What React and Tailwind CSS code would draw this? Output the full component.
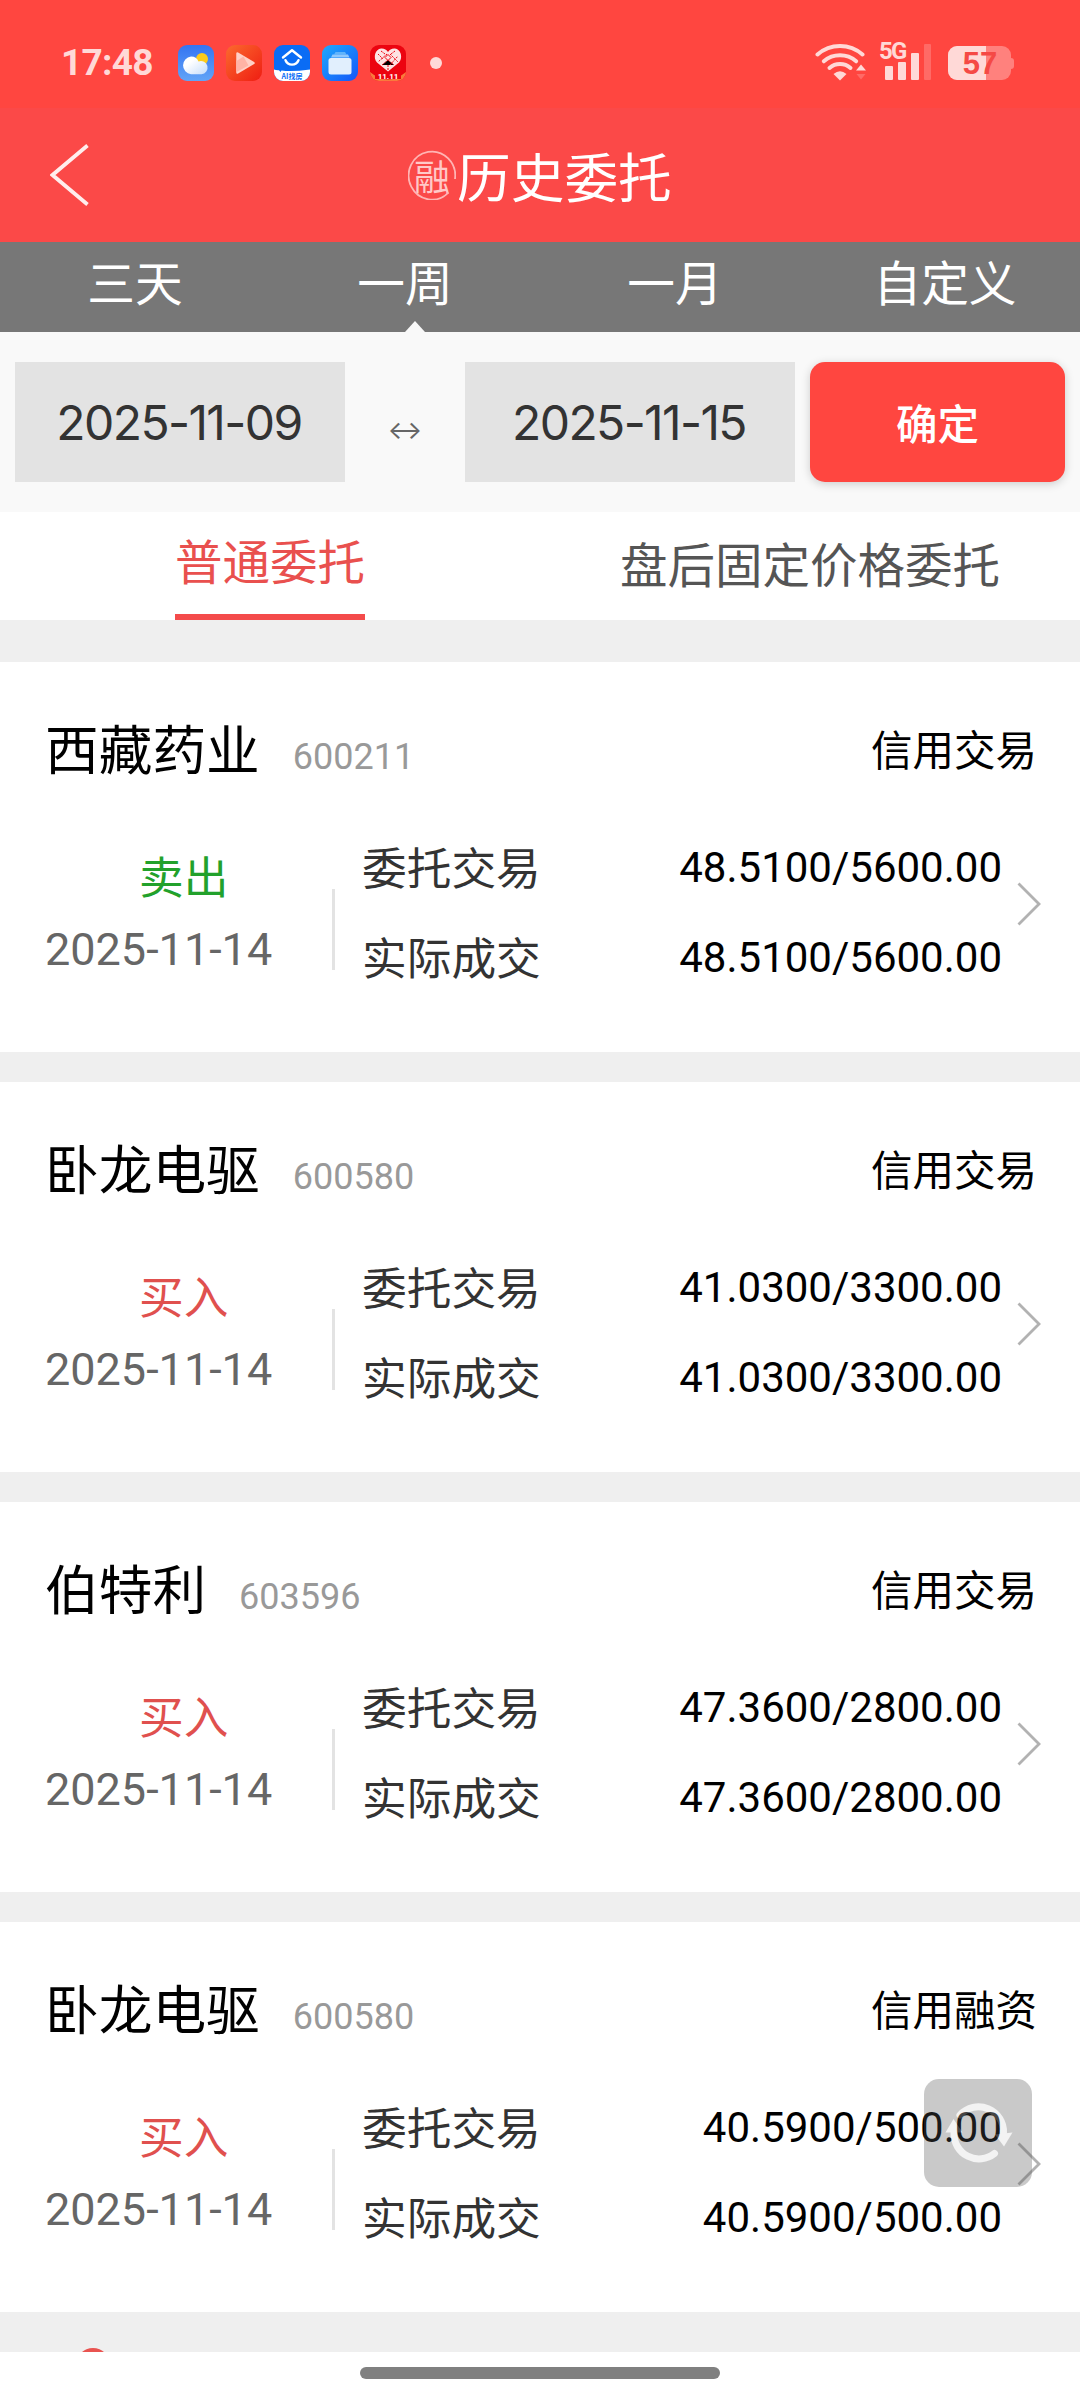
import clsx from 'clsx';

const ranges = ['三天', '一周', '一月', '自定义'];

const orders = [
    {
        name: '西藏药业',
        code: '600211',
        type: '信用交易',
        side: '卖出',
        date: '2025-11-14',
        entrust: '48.5100/5600.00',
        deal: '48.5100/5600.00',
    },
    {
        name: '卧龙电驱',
        code: '600580',
        type: '信用交易',
        side: '买入',
        date: '2025-11-14',
        entrust: '41.0300/3300.00',
        deal: '41.0300/3300.00',
    },
    {
        name: '伯特利',
        code: '603596',
        type: '信用交易',
        side: '买入',
        date: '2025-11-14',
        entrust: '47.3600/2800.00',
        deal: '47.3600/2800.00',
    },
    {
        name: '卧龙电驱',
        code: '600580',
        type: '信用融资',
        side: '买入',
        date: '2025-11-14',
        entrust: '40.5900/500.00',
        deal: '40.5900/500.00',
    },
];

const WeatherIcon = () => (
    <svg viewBox="0 0 36 36" className="w-9 h-9">
        <defs>
            <linearGradient id="sky" x1="0" y1="0" x2="0" y2="1">
                <stop offset="0" stopColor="#3474f2" />
                <stop offset="1" stopColor="#62a4f7" />
            </linearGradient>
            <linearGradient id="cloud" x1="0" y1="0" x2="1" y2="1">
                <stop offset="0.3" stopColor="#ffffff" />
                <stop offset="1" stopColor="#c4dcfb" />
            </linearGradient>
        </defs>
        <rect width="36" height="36" rx="9" fill="url(#sky)" />
        <circle cx="24" cy="14" r="6" fill="#fccb1c" />
        <path
            d="M13 11.5a8 8 0 0 1 7.5 5 6.6 6.6 0 1 1 3 12.7H13a8.9 8.9 0 0 1 0-17.7z"
            fill="url(#cloud)"
        />
    </svg>
);

const VideoIcon = () => (
    <svg viewBox="0 0 36 36" className="w-9 h-9">
        <defs>
            <linearGradient id="video" x1="0" y1="0" x2="1" y2="1">
                <stop offset="0" stopColor="#fb6a2e" />
                <stop offset="1" stopColor="#ef1d12" />
            </linearGradient>
        </defs>
        <rect width="36" height="36" rx="9" fill="url(#video)" />
        <path
            d="M11.5 8.5 27.5 18 11.5 27.5z"
            fill="#ffd0c6"
            stroke="#ffd0c6"
            strokeWidth="2.5"
            strokeLinejoin="round"
        />
        <path d="M10.5 27V16l7-4.5 5 9z" fill="#ffb3a5" />
    </svg>
);

const HouseIcon = () => (
    <svg viewBox="0 0 36 36" className="w-9 h-9">
        <rect width="36" height="36" rx="9" fill="#0a6cf5" />
        <path
            d="M0 24.5q2 1 5 .8L6.5 27l1-1.5Q18 27 36 24.5V27a9 9 0 0 1-9 9H9a9 9 0 0 1-9-9z"
            fill="#fff"
        />
        <path
            d="M9 12.5 18 5.2l9 7.3M11.5 15.2a7 7 0 0 0 13 0"
            fill="none"
            stroke="#fff"
            strokeWidth="2.4"
            strokeLinecap="round"
            strokeLinejoin="round"
        />
        <text
            x="18"
            y="33.6"
            textAnchor="middle"
            fontSize="7"
            fontWeight="700"
            fill="#0a6cf5"
            fontFamily="'Noto Sans CJK SC', sans-serif"
        >
            AI找房
        </text>
    </svg>
);

const FilesIcon = () => (
    <svg viewBox="0 0 36 36" className="w-9 h-9">
        <defs>
            <linearGradient id="files" x1="0" y1="0" x2="1" y2="1">
                <stop offset="0" stopColor="#1fa9fd" />
                <stop offset="1" stopColor="#1456f8" />
            </linearGradient>
        </defs>
        <rect width="36" height="36" rx="9" fill="url(#files)" />
        <path d="M13.5 7H23l1.5 2.5H12z" fill="#5fb4fb" />
        <path d="M10.5 9.5H26l1.5 3H9z" fill="#8fc8fc" />
        <rect x="6.5" y="13" width="23" height="16.5" rx="2.5" fill="#e1effd" />
    </svg>
);

const ShopIcon = () => (
    <svg viewBox="0 0 36 36" className="w-9 h-9">
        <defs>
            <clipPath id="shop">
                <rect width="36" height="36" rx="9" />
            </clipPath>
        </defs>
        <g clipPath="url(#shop)">
            <rect width="36" height="36" fill="#ec0410" />
            <path d="M0 27q18 15 36 0v9H0z" fill="#f97a3c" />
            <path d="M5 25q13 12 26 0v9H5z" fill="#ec0410" />
            <path
                d="M18 26.5 7 17.5C2.5 12.5 5.5 4 11 3.5c3-.3 5.5 1 7 3.5 1.5-2.5 4-3.8 7-3.5 5.5.5 8.5 9 4 14z"
                fill="#fde3e3"
            />
            <path
                d="m8 9 5 5m4-5-9 8m12 3 8-9m-8-2 8 8M12 20l6-5 6 5M11 6l4 3m10-3-4 3M18 20v5"
                stroke="#ec0410"
                strokeWidth="1"
                strokeDasharray="2 1"
            />
            <path
                d="M18 9.5 21 12.5 18 15.5 15 12.5z"
                fill="none"
                stroke="#ec0410"
            />
            <text
                x="18"
                y="34"
                textAnchor="middle"
                fontSize="8"
                fontWeight="700"
                fill="#fff"
                fontFamily="Roboto, sans-serif"
            >
                11.11
            </text>
        </g>
    </svg>
);

const WifiIcon = () => (
    <svg viewBox="0 0 52 38" className="w-[52px] h-[38px]">
        <g
            fill="none"
            stroke="#ffd9d7"
            strokeWidth="4"
            strokeLinecap="round"
        >
            <path d="M2.5 11.5a34 34 0 0 1 45 0" />
            <path d="M8.8 18.3a25 25 0 0 1 32.4 0" />
            <path d="M14.5 25a16 16 0 0 1 21 0" />
        </g>
        <path d="M25 37.5l-6.5-6.5q6.5-5.5 13 0z" fill="#ffd9d7" />
        <path d="M46 21.5l5 6H41z" fill="#ffd9d7" />
        <path d="M46 36.5l4.5-5.500h-9z" fill="#ff6a66" />
    </svg>
);

const StatusBar = () => (
    <div className="h-[108px] bg-[#ff4640] flex items-start justify-between pl-[61px] pr-[66px] font-[Roboto,sans-serif]">
        <div className="flex items-center h-9 mt-[45px]">
            <span className="w-[117px] text-[37px] leading-9 font-bold tracking-[-0.7px] text-[#ffd9d7]">
                17:48
            </span>
            <div className="flex gap-3">
                <WeatherIcon />
                <VideoIcon />
                <HouseIcon />
                <FilesIcon />
                <ShopIcon />
            </div>
            <span className="ml-6 w-3 h-3 rounded-full bg-[#ffd9d7]" />
        </div>
        <div className="flex items-end h-[38px] mt-[43px]">
            <WifiIcon />
            <div className="relative flex items-end gap-[5px] ml-[18px] w-[63px] h-[37px] mb-px">
                <span className="absolute -left-[6px] -top-px text-[24px] leading-[18px] font-bold tracking-[-1.8px] text-[#ffd9d7]">
                    5G
                </span>
                <span className="w-2 h-[14px] rounded-[1px] bg-[#ffd9d7]" />
                <span className="w-2 h-[18px] rounded-[1px] bg-[#ffd9d7]" />
                <span className="w-2 h-[27px] rounded-[1px] bg-[#ffd9d7]" />
                <span className="w-[7px] h-9 rounded-[1px] bg-[#ff6a66]" />
            </div>
            <div className="relative flex items-center mb-px">
                <div className="w-[63px] h-[34px] rounded-[9px] overflow-hidden flex bg-[#ff817d]">
                    <span className="w-[38px] h-full bg-[#ffd9d7]" />
                </div>
                <span className="w-[3px] h-[11px] rounded-r-[3px] bg-[#ff817d]" />
                <span className="absolute left-0 top-0 w-[63px] pl-px text-center font-['Liberation_Sans',sans-serif] text-[31px] leading-[36px] font-bold text-[#f54945]">
                    57
                </span>
            </div>
        </div>
    </div>
);

const Header = () => (
    <div className="h-[134px] bg-[#fb4948] flex items-center text-white">
        <svg viewBox="0 0 40 64" className="w-10 h-16 ml-[50px]">
            <path
                d="M37.5 2.5 2.5 32l35 29.5"
                fill="none"
                stroke="#fff"
                strokeWidth="3.8"
                opacity="0.9"
            />
        </svg>
        <div className="flex items-center ml-[318px]">
            <div className="relative w-12 h-[50px] flex items-center justify-center">
                <svg
                    viewBox="0 0 48 50"
                    className="absolute inset-0 w-12 h-[50px]"
                >
                    <path
                        d="M47 29A23.3 24 0 1 0 40.5 42.5"
                        fill="none"
                        stroke="#ffb5b4"
                        strokeWidth="1.8"
                    />
                </svg>
                <span className="text-[36px] leading-[46px] font-normal text-[#ffc9c8]">
                    融
                </span>
            </div>
            <h1 className="pl-px text-[53.7px] leading-[60px]">历史委托</h1>
        </div>
    </div>
);

const RangeTabs = () => (
    <div className="h-[90px] bg-[#777] grid grid-cols-4 text-white text-[47.7px] leading-[77px] text-center">
        {ranges.map((r) => (
            <div key={r} className="relative">
                {r}
                {r === '一周' && (
                    <svg
                        viewBox="0 0 20 11"
                        className="absolute left-[135px] bottom-0 w-5 h-[11px]"
                    >
                        <path d="M0 11 10 0l10 11z" fill="#f9f9f9" />
                    </svg>
                )}
            </div>
        ))}
    </div>
);

const DateBox = ({ value }) => (
    <div className="w-[330px] h-[120px] pr-[2px] bg-[#e3e3e3] text-center font-[Inter,sans-serif] text-[48px] leading-[122px] tracking-[-1.6px] text-[#333]">
        {value}
    </div>
);

const DateFilter = () => (
    <div className="h-[180px] bg-[#f9f9f9] flex items-center px-[15px]">
        <DateBox value="2025-11-09" />
        <span className="w-[120px] pt-[14px] text-center font-[Inter,sans-serif] text-[26px] text-[#666]">
            ↔
        </span>
        <DateBox value="2025-11-15" />
        <button className="ml-[15px] w-[255px] h-[120px] rounded-[15px] bg-[#ff4640] shadow-[0_2px_10px_rgba(0,0,0,0.18)] text-[41.5px] leading-[60px] font-medium text-white">
            确定
        </button>
    </div>
);

const KindTabs = () => (
    <div className="h-[108px] bg-white grid grid-cols-2 justify-items-center text-[47.5px]">
        <div className="w-[190px] h-[108px] border-b-[6px] border-[#f44b4b] leading-[96px] text-[#e9504e]">
            普通委托
        </div>
        <div className="leading-[102px] text-[#555]">盘后固定价格委托</div>
    </div>
);

const OrderCard = ({ order }) => (
    <div className="h-[390px] bg-white pt-[55px]">
        <div className="h-[60px] flex items-baseline pl-[45px] pr-[43px] leading-[60px] text-black">
            <h2 className="text-[53.7px]">{order.name}</h2>
            <span className="relative -top-px ml-[33px] font-[Roboto,sans-serif] text-[36px] text-[#999]">
                {order.code}
            </span>
            <span className="ml-auto pt-[2px] self-center text-[41.5px]">
                {order.type}
            </span>
        </div>
        <div className="flex items-start">
            <div className="w-[332px] pt-[68px] pl-[45px] text-[45px] leading-[60px]">
                <div
                    className={clsx(
                        'pl-[94px] text-[44.7px]',
                        order.side === '卖出'
                            ? 'text-[#22a12b]'
                            : 'text-[#e0504e]',
                    )}
                >
                    {order.side}
                </div>
                <div className="mt-[15px] font-[Roboto,sans-serif] text-[#666]">
                    {order.date}
                </div>
            </div>
            <div className="mt-[112px] w-[3px] h-[81px] bg-[#e3e3e3]" />
            <div className="ml-[27px] mt-[44px] w-[640px] leading-[90px]">
                {[
                    ['委托交易', order.entrust],
                    ['实际成交', order.deal],
                ].map(([label, value]) => (
                    <div key={label} className="h-[90px] flex justify-between">
                        <span className="text-[44.7px] text-[#333]">
                            {label}
                        </span>
                        <span className="pt-[2px] font-[Roboto,sans-serif] text-[42px] text-black">
                            {value}
                        </span>
                    </div>
                ))}
            </div>
            <svg
                viewBox="0 0 24 44"
                className="w-6 h-11 ml-[15px] mt-[105px]"
            >
                <path
                    d="M1.5 1.5 22 22 1.5 42.5"
                    fill="none"
                    stroke="#b2b2b2"
                    strokeWidth="2.8"
                />
            </svg>
        </div>
    </div>
);

const RefreshButton = () => (
    <button className="absolute left-[924px] top-[2079px] w-[108px] h-[108px] rounded-[15px] bg-[#555] opacity-[0.31]">
        <svg viewBox="0 0 108 108" className="w-[108px] h-[108px]">
            <g
                fill="none"
                stroke="#dadada"
                strokeWidth="7"
                strokeLinecap="round"
            >
                <path d="M36 36a25 25 0 0 1 43.5 18" />
                <path d="M30 54a25 25 0 0 0 40.5 20.5" />
            </g>
            <path d="M71 55.5l17.5-2L80 67.5z" fill="#dadada" />
            <path d="M21.5 53.5 29.5 40l9 13.5z" fill="#dadada" />
        </svg>
    </button>
);

const App = () => (
    <div className="relative w-[1080px] h-[2400px] overflow-hidden bg-white font-['Noto_Sans_CJK_SC',sans-serif]">
        <StatusBar />
        <Header />
        <RangeTabs />
        <DateFilter />
        <KindTabs />
        <div className="h-[1732px] overflow-hidden bg-[#efefef] pt-[42px]">
            <div className="flex flex-col gap-[30px]">
                {orders.map((order, i) => (
                    <OrderCard key={i} order={order} />
                ))}
            </div>
            <div className="mt-9 ml-[76px] w-[34px] h-[34px] rounded-full bg-[#e95350]" />
        </div>
        <div className="h-12 flex justify-center pt-[15px]">
            <span className="w-[360px] h-3 rounded-full bg-[#808080]" />
        </div>
        <RefreshButton />
    </div>
);

export default App;
